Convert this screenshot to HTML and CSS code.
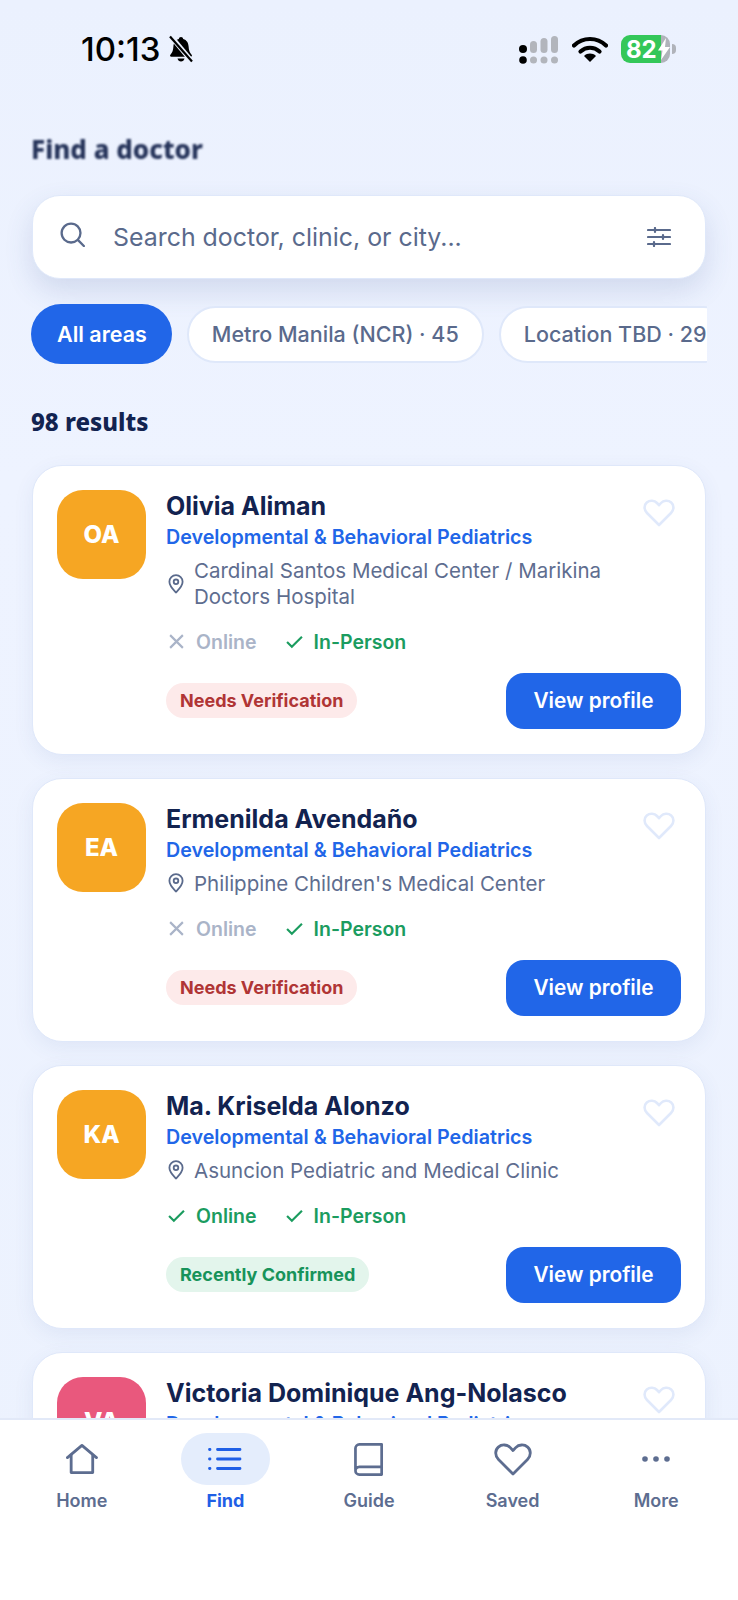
FILE: index.html
```html
<!DOCTYPE html>
<html lang="en">
<head>
    <meta charset="UTF-8">
    <meta name="viewport" content="width=device-width, initial-scale=1.0">
    <title>Find a doctor</title>
    <link rel="stylesheet" href="styles.css">
</head>
<body>
    <div class="screen">
        <div class="statusbar">
            <div class="status-left">
                <span class="clock">10:13</span>
                <svg class="bell" viewBox="0 0 26 28"><path d="M13 2c-1.300 0-2 .9-2.200 2C7.200 5 5.600 8 5.400 11.500c-.2 3.800-1 6.200-3 8.200-.8.900-.3 2 .9 2h19.400c1.200 0 1.700-1.100.9-2-2-2-2.800-4.400-3-8.200C20.400 8 18.800 5 15.200 4 15 2.900 14.300 2 13 2z" fill="#000"/><path d="M9.500 23.500c.4 1.800 1.800 3 3.500 3s3.100-1.200 3.500-3z" fill="#000"/><path d="M3 1.500l21 25" stroke="#eaf1fe" stroke-width="5"/><path d="M2 1.500l22 25" stroke="#000" stroke-width="2.200"/></svg>
            </div>
            <div class="status-right">
                <svg class="signal" viewBox="0 0 40 28"><rect x="0" y="9" width="8" height="8" rx="4" fill="#000"/><rect x="11" y="5" width="7" height="12" rx="3.500" fill="#b2b5bc"/><rect x="21.500" y="2" width="7" height="15" rx="3.500" fill="#b2b5bc"/><rect x="32" y="0" width="7" height="17" rx="3.500" fill="#b2b5bc"/><circle cx="4" cy="24" r="3.800" fill="#000"/><circle cx="14.500" cy="24" r="3.500" fill="#b2b5bc"/><circle cx="25" cy="24" r="3.500" fill="#b2b5bc"/><circle cx="35.500" cy="24" r="3.500" fill="#b2b5bc"/></svg>
                <svg class="wifi" viewBox="0 0 36 26"><path d="M2 9.500C11 .8 25 .8 34 9.500" fill="none" stroke="#000" stroke-width="4.200" stroke-linecap="round"/><path d="M8.500 15.500c5.500-5 13.500-5 19 0" fill="none" stroke="#000" stroke-width="4.200" stroke-linecap="round"/><path d="M12 20c3.500-3.200 8.500-3.200 12 0l-6 6z" fill="#000"/></svg>
                <div class="battery"><span>82</span><svg class="bolt" viewBox="0 0 12 22"><path d="M8 0L0 12.500h4.500L3 22l9-13H7z" fill="#fff"/></svg></div>
            </div>
        </div>

        <div class="content">
            <h1 class="page-title">Find a doctor</h1>

            <div class="search">
                <svg class="search-icon" viewBox="0 0 26 26"><circle cx="11.500" cy="11.500" r="9.800" fill="none" stroke="#5a6a8c" stroke-width="2.400"/><path d="M18.800 18.800l6 6.200" stroke="#5a6a8c" stroke-width="2.400" stroke-linecap="round"/></svg>
                <span class="search-text">Search doctor, clinic, or city...</span>
                <svg class="filter-icon" viewBox="0 0 24 20" fill="none" stroke="#5a6a8c" stroke-width="2.200" stroke-linecap="round"><path d="M1 3h22M1 10h22M1 17h22"/><path d="M8 1v4M16 8v4M7 15v4"/></svg>
            </div>

            <div class="chips">
                <span class="chip active">All areas</span>
                <span class="chip">Metro Manila (NCR) · 45</span>
                <span class="chip">Location TBD · 29</span>
            </div>

            <div class="results">98 results</div>

            <div class="card">
                <div class="avatar orange">OA</div>
                <div class="info">
                    <div class="name">Olivia Aliman</div>
                    <div class="specialty">Developmental &amp; Behavioral Pediatrics</div>
                    <div class="address">
                        <svg class="pin" viewBox="0 0 16 20"><path d="M8 1.200c-3.700 0-6.600 2.900-6.600 6.500 0 4.500 4.500 8.600 6.600 10.800 2.100-2.200 6.600-6.300 6.600-10.800 0-3.600-2.900-6.500-6.600-6.500z" fill="none" stroke="#5a6a8c" stroke-width="1.800"/><circle cx="8" cy="7.800" r="2.300" fill="none" stroke="#5a6a8c" stroke-width="1.800"/></svg>
                        <span>Cardinal Santos Medical Center / Marikina Doctors Hospital</span>
                    </div>
                    <div class="modes">
                        <span class="mode off"><svg viewBox="0 0 16 16"><path d="M2 2l12 12M14 2L2 14"/></svg>Online</span>
                        <span class="mode on"><svg viewBox="0 0 16 16"><path d="M1 8.500l4.500 4.500L15 3.500"/></svg>In-Person</span>
                    </div>
                    <div class="card-footer">
                        <span class="badge warn">Needs Verification</span>
                        <button class="view-btn">View profile</button>
                    </div>
                </div>
                <svg class="heart" viewBox="0 0 32 28"><path d="M16 26L4 14C.8 10.800.8 6 3.800 3.500 6.800 1 11.500 1.300 14 4l2 2.200L18 4c2.500-2.700 7.200-3 10.200-.5 3 2.500 3 7.300-.2 10.500z"/></svg>
            </div>

            <div class="card">
                <div class="avatar orange">EA</div>
                <div class="info">
                    <div class="name">Ermenilda Avendaño</div>
                    <div class="specialty">Developmental &amp; Behavioral Pediatrics</div>
                    <div class="address">
                        <svg class="pin" viewBox="0 0 16 20"><path d="M8 1.200c-3.700 0-6.600 2.900-6.600 6.500 0 4.500 4.500 8.600 6.600 10.800 2.100-2.200 6.600-6.300 6.600-10.800 0-3.600-2.900-6.500-6.600-6.500z" fill="none" stroke="#5a6a8c" stroke-width="1.800"/><circle cx="8" cy="7.800" r="2.300" fill="none" stroke="#5a6a8c" stroke-width="1.800"/></svg>
                        <span>Philippine Children's Medical Center</span>
                    </div>
                    <div class="modes">
                        <span class="mode off"><svg viewBox="0 0 16 16"><path d="M2 2l12 12M14 2L2 14"/></svg>Online</span>
                        <span class="mode on"><svg viewBox="0 0 16 16"><path d="M1 8.500l4.500 4.500L15 3.500"/></svg>In-Person</span>
                    </div>
                    <div class="card-footer">
                        <span class="badge warn">Needs Verification</span>
                        <button class="view-btn">View profile</button>
                    </div>
                </div>
                <svg class="heart" viewBox="0 0 32 28"><path d="M16 26L4 14C.8 10.800.8 6 3.800 3.500 6.800 1 11.500 1.300 14 4l2 2.200L18 4c2.500-2.700 7.200-3 10.200-.5 3 2.500 3 7.300-.2 10.500z"/></svg>
            </div>

            <div class="card">
                <div class="avatar orange">KA</div>
                <div class="info">
                    <div class="name">Ma. Kriselda Alonzo</div>
                    <div class="specialty">Developmental &amp; Behavioral Pediatrics</div>
                    <div class="address">
                        <svg class="pin" viewBox="0 0 16 20"><path d="M8 1.200c-3.700 0-6.600 2.900-6.600 6.500 0 4.500 4.500 8.600 6.600 10.800 2.100-2.200 6.600-6.300 6.600-10.800 0-3.600-2.900-6.500-6.600-6.500z" fill="none" stroke="#5a6a8c" stroke-width="1.800"/><circle cx="8" cy="7.800" r="2.300" fill="none" stroke="#5a6a8c" stroke-width="1.800"/></svg>
                        <span>Asuncion Pediatric and Medical Clinic</span>
                    </div>
                    <div class="modes">
                        <span class="mode on"><svg viewBox="0 0 16 16"><path d="M1 8.500l4.500 4.500L15 3.500"/></svg>Online</span>
                        <span class="mode on"><svg viewBox="0 0 16 16"><path d="M1 8.500l4.500 4.500L15 3.500"/></svg>In-Person</span>
                    </div>
                    <div class="card-footer">
                        <span class="badge ok">Recently Confirmed</span>
                        <button class="view-btn">View profile</button>
                    </div>
                </div>
                <svg class="heart" viewBox="0 0 32 28"><path d="M16 26L4 14C.8 10.800.8 6 3.800 3.500 6.800 1 11.500 1.300 14 4l2 2.200L18 4c2.500-2.700 7.200-3 10.200-.5 3 2.500 3 7.300-.2 10.500z"/></svg>
            </div>

            <div class="card">
                <div class="avatar pink">VA</div>
                <div class="info">
                    <div class="name">Victoria Dominique Ang-Nolasco</div>
                    <div class="specialty">Developmental &amp; Behavioral Pediatrics</div>
                </div>
                <svg class="heart" viewBox="0 0 32 28"><path d="M16 26L4 14C.8 10.800.8 6 3.800 3.500 6.800 1 11.500 1.300 14 4l2 2.200L18 4c2.500-2.700 7.200-3 10.200-.5 3 2.500 3 7.300-.2 10.500z"/></svg>
            </div>
        </div>

        <nav class="tabbar">
            <div class="tab">
                <span class="tab-icon"><svg viewBox="0 0 34 32" fill="none" stroke="#5d6d90" stroke-width="3" stroke-linejoin="round" stroke-linecap="round"><path d="M1.500 14.500L17 1.500l15.500 13"/><path d="M5.500 12v18.500h23V12"/></svg></span>
                <span class="tab-label">Home</span>
            </div>
            <div class="tab current">
                <span class="tab-icon"><svg viewBox="0 0 34 24" fill="none" stroke="#1f5fe6" stroke-width="2.800" stroke-linecap="round"><path d="M9.500 2.500h22.500M9.500 12h22.500M9.500 21.500h22.500"/><path d="M1.500 2.500h.5M1.500 12h.5M1.500 21.500h.5"/></svg></span>
                <span class="tab-label">Find</span>
            </div>
            <div class="tab">
                <span class="tab-icon"><svg viewBox="0 0 30 34" fill="none" stroke="#5d6d90" stroke-width="2.800" stroke-linejoin="round"><path d="M1.500 27.500V5.500c0-2.200 1.800-4 4-4h23v31H5.500c-2.200 0-4-1.800-4-4s1.800-4 4-4h23"/></svg></span>
                <span class="tab-label">Guide</span>
            </div>
            <div class="tab">
                <span class="tab-icon"><svg viewBox="0 0 38 33" fill="none" stroke="#5d6d90" stroke-width="2.800" stroke-linejoin="round"><path d="M19 31L4.500 16.500C.8 12.800.8 7.200 4.300 4.100 7.800 1 13.200 1.400 16.300 4.600L19 7.500l2.700-2.900c3.100-3.200 8.500-3.600 12-.5 3.500 3.100 3.500 8.700-.2 12.400z"/></svg></span>
                <span class="tab-label">Saved</span>
            </div>
            <div class="tab">
                <span class="tab-icon"><svg viewBox="0 0 30 8" fill="#5d6d90"><circle cx="4" cy="4" r="2.800"/><circle cx="15" cy="4" r="2.800"/><circle cx="26" cy="4" r="2.800"/></svg></span>
                <span class="tab-label">More</span>
            </div>
        </nav>
    </div>
</body>
</html>
```

FILE: styles.css
```css
* {
    box-sizing: border-box;
}
body {
    margin: 0;
    font-family: Inter, "Liberation Sans", sans-serif;
    color: #122350;
}
.screen {
    position: relative;
    height: 1600px;
    overflow: hidden;
    background: linear-gradient(180deg, #ebf1fe 0%, #eef3ff 30%, #ecf2fe 100%);
}

/* status bar */
.statusbar {
    display: flex;
    justify-content: space-between;
    align-items: center;
    height: 98px;
    padding: 0 68px 0 81px;
}
.status-left {
    display: flex;
    align-items: center;
    gap: 8px;
}
.clock {
    font-size: 33px;
    font-weight: 500;
    color: #000;
}
.bell {
    width: 26px;
    height: 28px;
}
.status-right {
    display: flex;
    align-items: center;
}
.signal {
    width: 40px;
    height: 28px;
    margin-top: 2px;
}
.wifi {
    width: 36px;
    height: 26px;
    margin-left: 13px;
}
.battery {
    position: relative;
    display: flex;
    align-items: center;
    width: 49px;
    height: 28px;
    margin-left: 13px;
    padding-left: 5px;
    border-radius: 9px;
    background: linear-gradient(90deg, #34c759 0 81%, #b0b3ba 81%);
    color: #fff;
    font-size: 24px;
    font-weight: 700;
}
.battery::after {
    content: "";
    position: absolute;
    right: -6px;
    top: 9px;
    width: 4px;
    height: 10px;
    border-radius: 0 4px 4px 0;
    background: #b0b3ba;
}
.bolt {
    width: 12px;
    height: 22px;
    margin-left: 1px;
}

.content {
    padding: 0 32px;
}
.page-title {
    margin: 32px 0 0 -1px;
    height: 38px;
    font-family: "Noto Sans", sans-serif;
    font-size: 26px;
    line-height: 38px;
    font-weight: 800;
    color: #25335a;
    filter: blur(0.8px);
}

/* search */
.search {
    display: flex;
    align-items: center;
    height: 84px;
    margin-top: 27px;
    padding: 0 34px 0 27px;
    background: #fff;
    border: 1px solid #dfe8fa;
    border-radius: 28px;
    box-shadow: 0 12px 28px rgba(60, 90, 150, 0.16);
}
.search-icon {
    width: 25px;
    height: 25px;
    margin-top: -6px;
}
.search-text {
    flex: 1;
    margin-left: 28px;
    font-size: 24.9px;
    color: #5a6a8c;
}
.filter-icon {
    width: 24px;
    height: 20px;
}

/* chips */
.chips {
    display: flex;
    align-items: center;
    gap: 15px;
    height: 60px;
    margin: 25px -1px 0 -1px;
    overflow: hidden;
}
.chip {
    flex-shrink: 0;
    height: 57px;
    padding: 0 23px;
    border: 2px solid #dfe8fa;
    border-radius: 29px;
    background: #fff;
    font-size: 21.5px;
    font-weight: 500;
    line-height: 53px;
    color: #5a6a8c;
}
.chip.active {
    height: 60px;
    padding: 0 25px 0 26px;
    border: 0;
    border-radius: 30px;
    background: #2166e8;
    color: #fff;
    font-weight: 600;
    line-height: 60px;
}

.results {
    margin: 38px 0 0 -1px;
    height: 40px;
    font-family: "Noto Sans", sans-serif;
    font-size: 24px;
    font-weight: 800;
    line-height: 40px;
    color: #122350;
}

/* doctor card */
.card {
    position: relative;
    display: flex;
    gap: 20px;
    margin-top: 23px;
    padding: 24px 24px 25px;
    background: #fff;
    border: 1px solid #dfe8fa;
    border-radius: 30px;
    box-shadow: 0 6px 20px rgba(60, 90, 150, 0.08);
}
.avatar {
    flex-shrink: 0;
    width: 89px;
    height: 89px;
    border-radius: 26px;
    color: #fff;
    font-size: 24px;
    font-weight: 800;
    line-height: 89px;
    text-align: center;
}
.orange {
    background: #f6a623;
}
.pink {
    background: #e9587d;
}
.info {
    flex: 1;
    min-width: 0;
}
.name {
    font-size: 25px;
    font-weight: 700;
    line-height: 32px;
    color: #122350;
}
.specialty {
    font-size: 19.7px;
    font-weight: 600;
    line-height: 30px;
    color: #2166e8;
}
.address {
    display: flex;
    align-items: center;
    gap: 10px;
    margin-top: 6px;
    padding-right: 70px;
    font-size: 20.5px;
    line-height: 25.5px;
    color: #5e6d8f;
}
.pin {
    flex-shrink: 0;
    width: 16px;
    height: 20px;
    margin-left: 2px;
}
.modes {
    display: flex;
    gap: 27px;
    margin-top: 19.5px;
    font-size: 19.5px;
    font-weight: 600;
    line-height: 26px;
}
.mode {
    display: flex;
    align-items: center;
    gap: 11px;
}
.mode svg {
    width: 17px;
    height: 17px;
    margin-left: 2px;
    fill: none;
    stroke: currentColor;
    stroke-width: 2;
}
.mode.off {
    color: #aab4c8;
}
.mode.on {
    color: #1b9c5f;
}
.card-footer {
    display: flex;
    justify-content: space-between;
    align-items: center;
    margin-top: 18px;
}
.badge {
    height: 35px;
    padding: 0 14px;
    border-radius: 18px;
    font-size: 18px;
    font-weight: 700;
    line-height: 35px;
}
.badge.warn {
    background: #fdeaea;
    color: #b03535;
}
.badge.ok {
    background: #e3f5ec;
    color: #17935a;
}
.view-btn {
    width: 175px;
    height: 56px;
    border: 0;
    border-radius: 18px;
    background: #2166e8;
    color: #fff;
    font-family: inherit;
    font-size: 20.8px;
    font-weight: 600;
}
.heart {
    position: absolute;
    top: 33px;
    right: 30px;
    width: 32px;
    height: 28px;
    fill: none;
    stroke: #e0e9fb;
    stroke-width: 2.6;
    stroke-linejoin: round;
}

/* bottom nav */
.tabbar {
    position: absolute;
    left: 0;
    right: 0;
    bottom: 0;
    display: flex;
    height: 182px;
    padding: 13px 10px 0;
    background: #fff;
    border-top: 2px solid #e2e9f8;
}
.tab {
    flex: 1;
    display: flex;
    flex-direction: column;
    align-items: center;
}
.tab-icon {
    display: flex;
    justify-content: center;
    align-items: center;
    width: 89px;
    height: 52px;
    border-radius: 26px;
}
.tab.current .tab-icon {
    background: #e4edfc;
}
.tab-icon svg {
    display: block;
    height: 33px;
    max-width: 38px;
}
.tab:first-child .tab-icon svg {
    height: 30px;
}
.tab:last-child .tab-icon svg {
    height: 8px;
}
.tab.current .tab-icon svg {
    height: 24px;
}
.tab-label {
    margin-top: 4px;
    font-size: 18px;
    font-weight: 600;
    line-height: 24px;
    color: #5d6d90;
}
.tab.current .tab-label {
    color: #1f5fe6;
    font-weight: 700;
}
```
